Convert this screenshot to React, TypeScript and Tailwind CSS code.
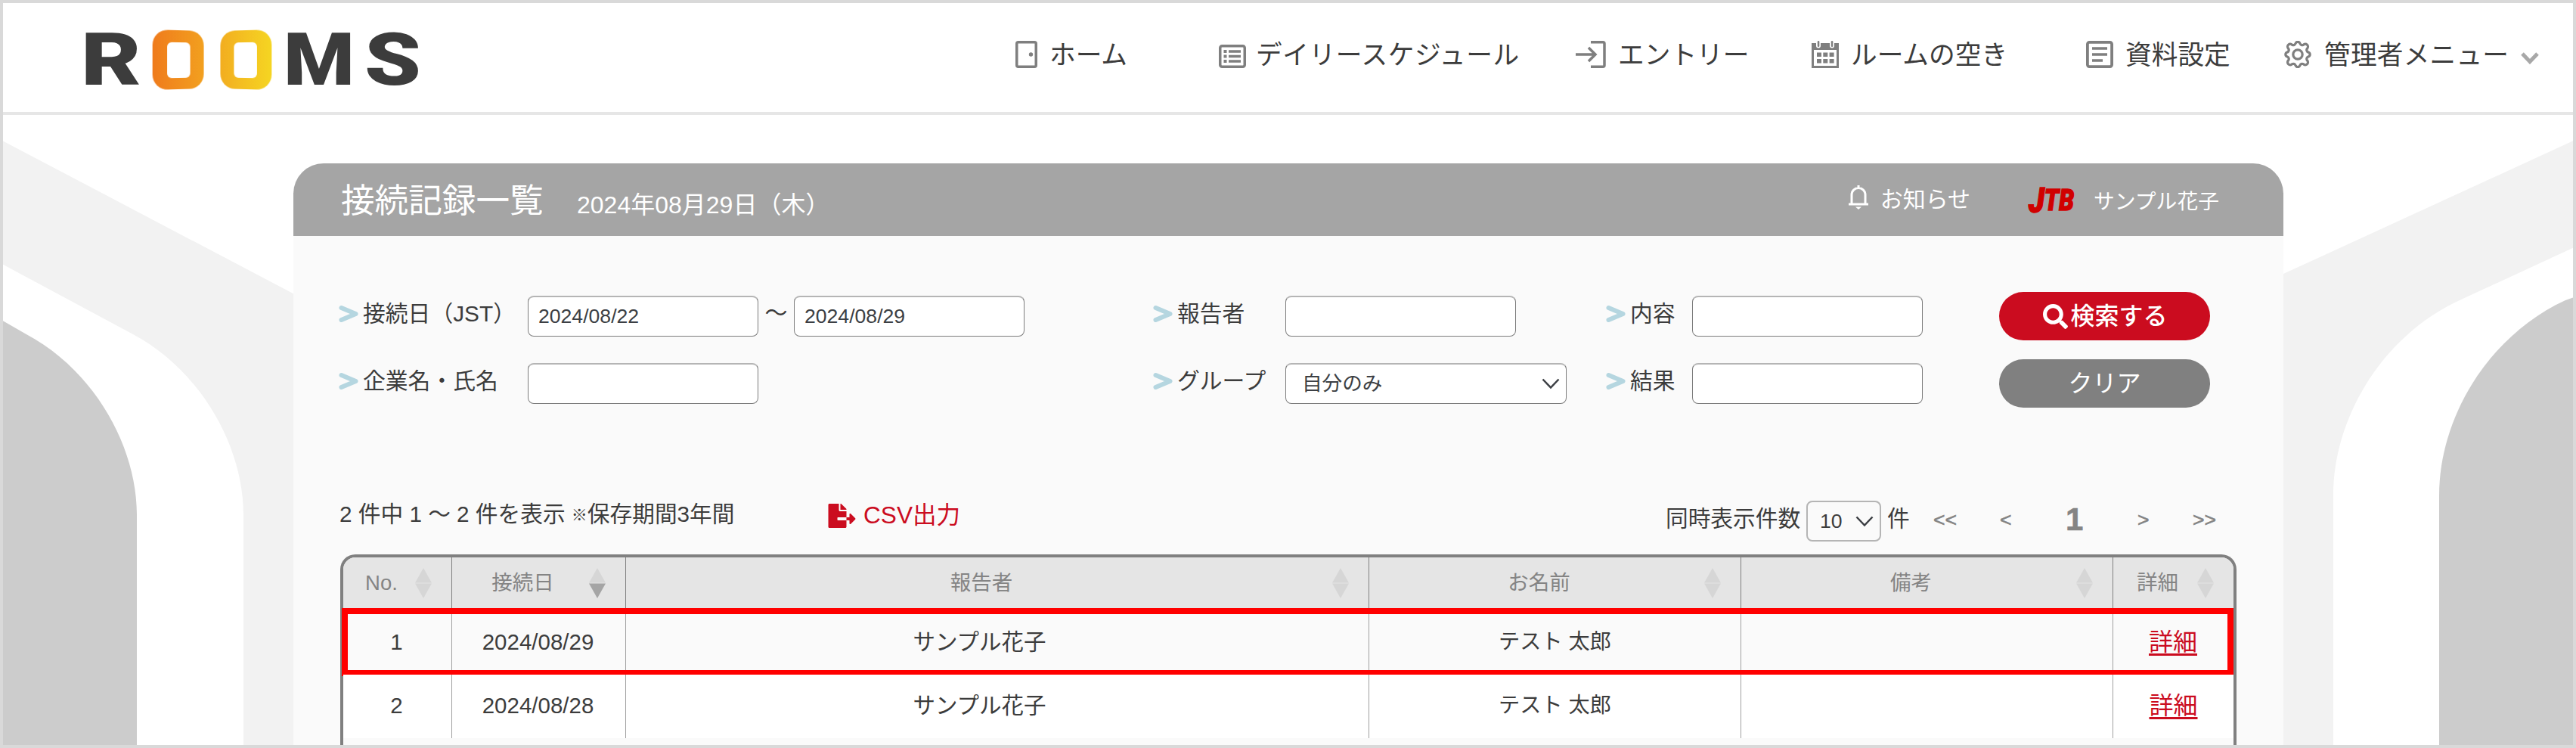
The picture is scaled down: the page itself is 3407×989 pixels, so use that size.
import React from "react";
import { FaFileExport, FaSearch } from "react-icons/fa";

interface NavProps {
  icon: React.ReactNode;
  label: string;
  className: string;
}

const NavItem = ({ icon, label, className }: NavProps) => (
  <a className={"flex h-full shrink-0 items-center whitespace-nowrap " + className}>
    <span className="-mt-1 block shrink-0">{icon}</span>
    <span>{label}</span>
  </a>
);

const HomeIcon = () => (
  <svg width="29" height="36" viewBox="0 0 29 36" fill="none" stroke="#7f7f7f" strokeWidth="3.500">
    <rect x="1.75" y="1.75" width="25.5" height="32.5" rx="2" />
    <circle cx="20.500" cy="18" r="2.700" fill="#7f7f7f" stroke="none" />
  </svg>
);

const ListIcon = () => (
  <svg width="36" height="36" viewBox="0 0 36 36" fill="none" stroke="#7f7f7f" strokeWidth="3.500">
    <rect x="1.75" y="6.75" width="32.5" height="27.5" rx="2.5" />
    <path d="M13 14h16M13 20.500h16M13 27h16" />
    <path d="M6.500 14h4M6.500 20.500h4M6.500 27h4" strokeWidth="4" />
  </svg>
);

const EntryIcon = () => (
  <svg width="40" height="36" viewBox="0 0 40 36" fill="none" stroke="#7f7f7f" strokeWidth="3.500">
    <path d="M20 1.750h16a2 2 0 0 1 2 2v28.500a2 2 0 0 1-2 2H20" />
    <path d="M0 18h26M17 9l9 9-9 9" />
  </svg>
);

const CalendarIcon = () => (
  <svg width="36" height="36" viewBox="0 0 36 36" fill="#7f7f7f">
    <path
      fillRule="evenodd"
      d="M0 3h6v3.500a3 3 0 0 0 6 0V3h12v3.500a3 3 0 0 0 6 0V3h6v33H0zM3 12v21h30V12z"
    />
    <rect x="7.800" y="0" width="2.500" height="8" rx="1.200" />
    <rect x="25.800" y="0" width="2.500" height="8" rx="1.200" />
    {[7, 15.3, 23.6].map((x) => (
      <React.Fragment key={x}>
        <rect x={x} y="15.500" width="6" height="5.500" />
        <rect x={x} y="24" width="6" height="5.500" />
      </React.Fragment>
    ))}
  </svg>
);

const DocIcon = () => (
  <svg width="36" height="36" viewBox="0 0 36 36" fill="none" stroke="#7f7f7f" strokeWidth="3.800">
    <rect x="1.9" y="1.9" width="32.2" height="32.2" rx="2.5" />
    <path d="M8 10h20M8 18h20M8 26h14" strokeWidth="3.500" />
  </svg>
);

const GearIcon = () => (
  <svg width="36" height="36" viewBox="1.5 1.5 21 21" fill="none" stroke="#7f7f7f" strokeWidth="1.900">
    <circle cx="12" cy="12" r="3.600" />
    <path
      strokeLinejoin="round"
      d="M10.300 3.500a1.800 1.800 0 0 1 3.400 0 1.800 1.800 0 0 0 2.600 1.100 1.800 1.800 0 0 1 3 2.800 1.800 1.800 0 0 0 .9 2.900 1.800 1.800 0 0 1 0 3.400 1.800 1.800 0 0 0-.9 2.900 1.800 1.800 0 0 1-3 2.800 1.800 1.800 0 0 0-2.600 1.100 1.800 1.800 0 0 1-3.400 0 1.800 1.800 0 0 0-2.600-1.100 1.800 1.800 0 0 1-3-2.800 1.800 1.800 0 0 0-.9-2.900 1.800 1.800 0 0 1 0-3.400 1.800 1.800 0 0 0 .9-2.900 1.800 1.800 0 0 1 3-2.800 1.800 1.800 0 0 0 2.600-1.100z"
    />
  </svg>
);

const Logo = () => (
  <div className="flex h-[138px] w-[460px] shrink-0 items-center">
    <svg width="82" height="130" className="shrink-0">
      <text x="-1" y="104" fontSize="96" fontWeight="900" textLength="80" lengthAdjust="spacingAndGlyphs" className="fill-[#3c3c3c] font-[Roboto]">
        R
      </text>
    </svg>
    <div className="ml-3 mt-3 flex h-[78px] w-[69px] shrink-0 items-center justify-center rounded-[20px] bg-linear-to-r from-[#ef7b1c] to-[#f2a01f] [transform:perspective(900px)_rotateY(35deg)_scaleX(1.2)]">
      <div className="h-[47px] w-[31px] rounded-[6px] bg-white" />
    </div>
    <div className="ml-[19px] mt-3 flex h-[78px] w-[69px] shrink-0 items-center justify-center rounded-[20px] bg-linear-to-r from-[#f2ad20] to-[#f5d522] [transform:perspective(900px)_rotateY(-35deg)_scaleX(1.2)]">
      <div className="h-[47px] w-[31px] rounded-[6px] bg-white" />
    </div>
    <svg width="200" height="130" className="ml-4 shrink-0">
      <text x="0" y="104" fontSize="96" fontWeight="900" textLength="94" lengthAdjust="spacingAndGlyphs" className="fill-[#3c3c3c] font-[Roboto]">
        M
      </text>
      <text x="107" y="104" fontSize="96" fontWeight="900" textLength="75" lengthAdjust="spacingAndGlyphs" className="fill-[#3c3c3c] font-[Roboto]">
        S
      </text>
    </svg>
  </div>
);

const Label = ({ text }: { text: string }) => (
  <div className="flex items-center gap-[6px] whitespace-nowrap pb-1.5 text-[29.800px]">
    <svg width="26" height="24" viewBox="0 0 26 24" fill="none" stroke="#b5d6e0" strokeWidth="6" strokeLinecap="round" strokeLinejoin="round">
      <path d="M3.500 4L22.500 12 3.500 20" />
    </svg>
    {text}
  </div>
);

const Input = ({ value = "" }: { value?: string }) => (
  <input
    defaultValue={value}
    className="h-[54px] w-[305px] rounded-lg border border-t-2 border-[#7c7c7c] border-t-[#b5b5b5] bg-white px-[13px] text-[26.600px] text-[#3c3f44]"
  />
);

const Chevron = () => (
  <svg width="24" height="15" viewBox="0 0 24 15" fill="none" stroke="#3c3f44" strokeWidth="2.500">
    <path d="M1.500 1.500L12 12.500 22.500 1.500" />
  </svg>
);

const SortIcon = ({ active = false }: { active?: boolean }) => (
  <svg width="22" height="40" viewBox="0 0 22 40" className="mr-[26px] shrink-0">
    <path d="M11 0l11 19.500H0z" fill="#d6d6d6" />
    <path d="M11 40L0 20.500h22z" fill={active ? "#a5a5a5" : "#d6d6d6"} />
  </svg>
);

const heads = ["No.", "接続日", "報告者", "お名前", "備考", "詳細"];

const rows = [
  { no: 1, date: "2024/08/29", reporter: "サンプル花子", name: "テスト 太郎" },
  { no: 2, date: "2024/08/28", reporter: "サンプル花子", name: "テスト 太郎" },
];

const Backdrop = () => (
  <svg width="3407" height="989" className="absolute -left-1 -top-1">
    <path d="M0 184.300L388 388.300V989H322V680C322 590 265 489 175 441.600L0 347.500z" fill="#f2f2f2" />
    <path d="M0 422L34 441.600C124 489 181 590 181 680V989H0z" fill="#ccc" />
    <path d="M3407 184.500L3020 362V989H3086V655C3086 550 3153 443 3253 397L3407 326z" fill="#f2f2f2" />
    <path d="M3407 392L3393 397C3293 443 3226 550 3226 655V989H3407z" fill="#ccc" />
  </svg>
);

const Header = () => (
  <header className="relative flex h-[148px] items-start border-b-4 border-[#e6e6e6] bg-white pl-[104px] text-[34.700px]">
    <Logo />
    <nav className="ml-[775px] flex h-[138px] pt-px">
      <NavItem className="w-[269px] gap-4" icon={<HomeIcon />} label="ホーム" />
      <NavItem className="w-[472px] gap-[13px] tracking-[0.6px]" icon={<ListIcon />} label="デイリースケジュール" />
      <NavItem className="w-[312px] gap-4" icon={<EntryIcon />} label="エントリー" />
      <NavItem className="w-[363px] gap-4" icon={<CalendarIcon />} label="ルームの空き" />
      <NavItem className="w-[262px] gap-4" icon={<DocIcon />} label="資料設定" />
      <NavItem className="w-[297px] gap-[17px] tracking-[0.2px]" icon={<GearIcon />} label="管理者メニュー" />
      <svg width="24" height="16" viewBox="0 0 24 16" fill="none" stroke="#a8a8a8" strokeWidth="5" className="ml-4 mt-[64px]">
        <path d="M2 2L12 12.500 22 2" />
      </svg>
    </nav>
  </header>
);

const TitleBar = () => (
  <div className="flex h-24 items-center rounded-t-[40px] bg-[#a5a5a5] text-white">
    <h1 className="ml-[63px] w-[312px] pt-1 text-[44.600px] whitespace-nowrap">接続記録一覧</h1>
    <p className="pt-3.5 text-[32px] whitespace-nowrap">2024年08月29日（木）</p>
    <div className="ml-auto mr-[85px] flex h-full items-center whitespace-nowrap">
      <svg width="28" height="33" viewBox="0 0 28 33" fill="none" stroke="#fff" strokeWidth="3" className="-mt-2">
        <path d="M1 26h26M5 26V13.500a9 9 0 0 1 18 0V26M14 1v4" />
        <path d="M10 29.500h8l-4 3.500z" fill="#fff" stroke="none" />
      </svg>
      <span className="ml-[15px] text-[30px]">お知らせ</span>
      <svg width="84" height="80" viewBox="0 0 84 80" className="ml-[70px] shrink-0 fill-[#d00000] stroke-[#d00000] stroke-[1.5px] font-[Roboto] font-black italic">
        <text x="7" y="57" textLength="60" lengthAdjust="spacingAndGlyphs">
          <tspan fontSize="46">J</tspan>
          <tspan fontSize="38" dy="-3">TB</tspan>
        </text>
      </svg>
      <span className="ml-[9px] pt-1.5 text-[27.800px]">サンプル花子</span>
    </div>
  </div>
);

const SearchForm = () => (
  <div className="grid grid-cols-[250px_827px_175px_424px_114px_406px_279px] grid-rows-[64px_64px] items-center gap-y-[25px] pt-[74px] pl-[60px]">
    <Label text="接続日（JST）" />
    <div className="flex items-center">
      <Input value="2024/08/22" />
      <span className="w-[47px] pb-2 text-center text-[30px]">～</span>
      <Input value="2024/08/29" />
    </div>
    <Label text="報告者" />
    <Input />
    <Label text="内容" />
    <Input />
    <button className="flex h-16 items-center justify-center gap-[3px] rounded-full bg-[#cb0c1f] pl-0.5 text-[32px] font-medium text-white">
      <FaSearch size={33} />
      検索する
    </button>
    <Label text="企業名・氏名" />
    <Input />
    <Label text="グループ" />
    <div className="flex h-[54px] w-[372px] items-center justify-between rounded-lg border border-t-2 border-[#7c7c7c] border-t-[#b5b5b5] bg-white pl-[21px] pr-2 text-[26.600px] text-[#3c3f44]">
      自分のみ
      <Chevron />
    </div>
    <Label text="結果" />
    <Input />
    <button className="h-16 rounded-full bg-[#808080] text-[32px] text-white">クリア</button>
  </div>
);

const ListTools = () => (
  <div className="flex h-[194px] items-start pt-[123px] pl-[61px] text-[29.700px]">
    <div className="flex h-[54px] w-[646px] items-center whitespace-nowrap pb-[18px]">
      <p>
        2 件中 1 ～ 2 件を表示 <span className="align-[2px] text-[21px] font-bold">※</span>保存期間3年間
      </p>
    </div>
    <a className="flex h-[54px] items-center gap-[10px] whitespace-nowrap pb-[15px] text-[31.600px] text-[#cb0c1f]">
      <FaFileExport className="h-8 w-[37px]" />
      CSV出力
    </a>
    <div className="ml-auto flex h-[54px] w-[817px] items-center whitespace-nowrap">
      <span className="w-[186px] pb-1.5">同時表示件数</span>
      <div className="flex h-[54px] w-[99px] items-center justify-between rounded-lg border-2 border-[#b5b5b5] pl-4 pr-2 text-[26.600px]">
        10
        <Chevron />
      </div>
      <span className="ml-2 w-[61px] pb-1.5">件</span>
      <div className="flex items-center pb-1 text-[26.600px] text-[#848484] [-webkit-text-stroke:0.6px_#848484]">
        <span className="w-[88px]">&lt;&lt;</span>
        <span className="w-[87px]">&lt;</span>
        <b className="w-[95px] text-[42px]">1</b>
        <span className="w-[73px]">&gt;</span>
        <span>&gt;&gt;</span>
      </div>
    </div>
  </div>
);

const Table = () => (
  <div className="ml-[62px] h-[260px] w-[2508px] rounded-t-[20px] border-4 border-b-0 border-[#808080]">
    <div className="grid h-[71px] grid-cols-[144px_230px_983px_492px_492px_159px] rounded-t-[16px] bg-[#e5e5e5] text-[27.500px] text-[#848484]">
      {heads.map((head, i) => (
        <div key={head} className="flex items-center border-r border-[#808080] pb-1 last:border-r-0">
          <span className="flex-1 pl-1.5 text-center">{head}</span>
          <SortIcon active={i === 1} />
        </div>
      ))}
    </div>
    {rows.map((row) => (
      <div
        key={row.no}
        className="relative grid h-[84px] grid-cols-[144px_230px_983px_492px_492px_159px] text-center text-[29.500px] odd:bg-white *:flex *:items-center *:justify-center *:border-r *:border-[#a0a0a0] *:pb-[3px] *:last:border-r-0"
      >
        <div className="pr-0.5">{row.no}</div>
        <div className="pr-0.5">{row.date}</div>
        <div className="pr-[47px]">{row.reporter}</div>
        <div className="text-[28.200px]">{row.name}</div>
        <div />
        <div>
          <a className="text-[32px] text-[#cb0c1f] underline decoration-3 underline-offset-4">詳細</a>
        </div>
        {row.no === 1 && <span className="absolute -top-1 -bottom-0.5 -left-0.5 right-0 border-8! border-[#ff0000]!" />}
      </div>
    ))}
  </div>
);

const App = () => {
  return (
    <div className="relative h-[989px] w-[3407px] overflow-hidden border-4 border-[#d9d9d9] bg-white font-['Liberation_Sans','Noto_Sans_CJK_JP',sans-serif] leading-none text-[#3c3c3c]">
      <Backdrop />
      <Header />
      <main className="relative ml-[384px] mt-16 h-[780px] w-[2632px] rounded-t-[40px] bg-[#fafafa]">
        <TitleBar />
        <SearchForm />
        <ListTools />
        <Table />
      </main>
    </div>
  );
};

export default App;
